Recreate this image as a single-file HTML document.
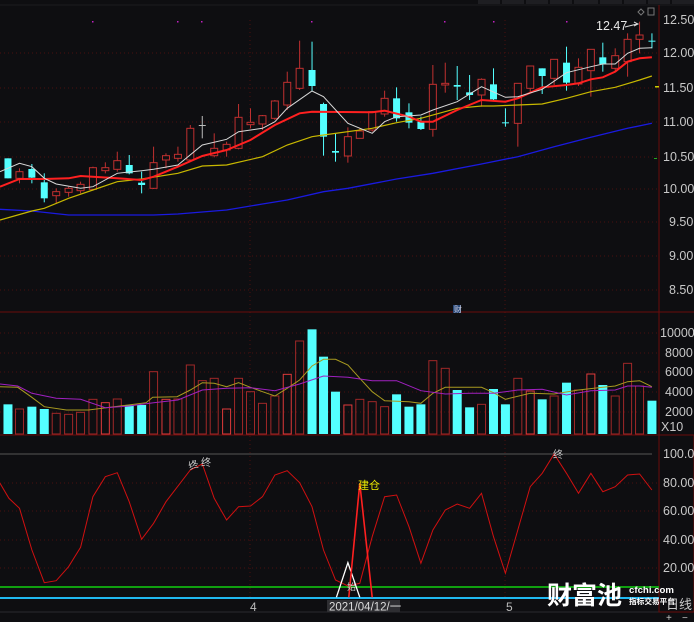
<!DOCTYPE html>
<html><head><meta charset="utf-8"><style>
html,body{margin:0;padding:0;background:#0e0e11;width:694px;height:622px;overflow:hidden}
svg{display:block}
text{font-family:"Liberation Sans","Noto Sans CJK SC",sans-serif}
</style></head><body>
<svg id="s" width="694" height="622" xmlns="http://www.w3.org/2000/svg">
<rect width="694" height="622" fill="#0e0e11"/>
<g fill="#1e1e22"><rect x="478" y="0" width="22" height="4"/><rect x="502" y="0" width="22" height="4"/><rect x="526" y="0" width="22" height="4"/><rect x="550" y="0" width="22" height="4"/><rect x="574" y="0" width="24" height="4"/><rect x="600" y="0" width="22" height="4"/><rect x="624" y="0" width="22" height="4"/><rect x="648" y="0" width="22" height="4"/><rect x="672" y="0" width="22" height="4"/></g>
<line x1="0" y1="5" x2="694" y2="5" stroke="#1c1c20"/>
<g stroke="#4a1010" stroke-dasharray="1,3">
<line x1="0" y1="53" x2="659" y2="53"/><line x1="0" y1="88" x2="659" y2="88"/><line x1="0" y1="122" x2="659" y2="122"/><line x1="0" y1="157" x2="659" y2="157"/><line x1="0" y1="189" x2="659" y2="189"/><line x1="0" y1="222" x2="659" y2="222"/><line x1="0" y1="256" x2="659" y2="256"/><line x1="0" y1="290" x2="659" y2="290"/>
<line x1="0" y1="333" x2="659" y2="333"/><line x1="0" y1="353" x2="659" y2="353"/><line x1="0" y1="372" x2="659" y2="372"/><line x1="0" y1="392" x2="659" y2="392"/><line x1="0" y1="412" x2="659" y2="412"/>
<line x1="0" y1="483" x2="659" y2="483"/><line x1="0" y1="511" x2="659" y2="511"/><line x1="0" y1="540" x2="659" y2="540"/><line x1="0" y1="568" x2="659" y2="568"/>
<line x1="250" y1="20" x2="250" y2="600"/><line x1="505" y1="20" x2="505" y2="600"/>
</g>
<g fill="#c020c0"><rect x="92" y="21" width="1.5" height="1.5"/><rect x="177" y="21" width="1.5" height="1.5"/><rect x="201" y="21" width="1.5" height="1.5"/><rect x="311" y="21" width="1.5" height="1.5"/><rect x="444" y="21" width="1.5" height="1.5"/><rect x="493" y="21" width="1.5" height="1.5"/><rect x="566" y="21" width="1.5" height="1.5"/></g>
<line x1="0" y1="312" x2="694" y2="312" stroke="#6a0c0c"/>
<line x1="0" y1="435" x2="694" y2="435" stroke="#6a0c0c"/>
<line x1="659" y1="5" x2="659" y2="612" stroke="#6a0c0c"/>
<line x1="0" y1="612" x2="694" y2="612" stroke="#2a2a2e"/>
<rect x="659" y="435" width="35" height="177" fill="none" stroke="#6a0c0c"/>
<line x1="0" y1="454" x2="652" y2="454" stroke="#555"/>
<rect x="453" y="305" width="8" height="8" fill="#2a4a7a"/><text x="454" y="312" font-size="8" fill="#ccd">财</text>
<g id="g"></g>
<g fill="#c8c8c8" font-size="12.5">
<text x="663" y="24">12.50</text><text x="663" y="57">12.00</text><text x="663" y="92">11.50</text><text x="663" y="126">11.00</text><text x="663" y="161">10.50</text><text x="663" y="193">10.00</text><text x="669" y="226">9.50</text><text x="669" y="260">9.00</text><text x="669" y="294">8.50</text>
<text x="660" y="337">10000</text><text x="665" y="357">8000</text><text x="665" y="376">6000</text><text x="665" y="396">4000</text><text x="665" y="416">2000</text><text x="661" y="431">X10</text>
<text x="663" y="458">100.0</text><text x="663" y="487">80.00</text><text x="663" y="515">60.00</text><text x="663" y="544">40.00</text><text x="663" y="572">20.00</text>
<text x="666" y="609" font-size="13">日线</text>
<text x="666" y="621" font-size="10">+</text><text x="682" y="621" font-size="10">−</text>
</g>
<text x="596" y="30" font-size="12.5" fill="#e8e8e8">12.47</text>
<path d="M625,27 L637,24" stroke="#ddd" fill="none"/><path d="M634,22 L638,24 L634,26" stroke="#ddd" fill="none"/>
<path d="M638,12 l3,-3 l3,3 l-3,3z" stroke="#777" fill="none"/><rect x="648" y="8" width="6" height="7" fill="none" stroke="#777"/>
<rect x="654" y="158" width="3" height="1" fill="#2a2"/>
<rect x="655" y="86" width="4" height="1.5" fill="#cc0"/>
<text x="250" y="611" font-size="12" fill="#bbb">4</text>
<text x="506" y="611" font-size="12" fill="#bbb">5</text>
<rect x="327" y="600" width="73" height="12" fill="#2e2e32"/>
<text x="329" y="610.5" font-size="11.5" fill="#ddd">2021/04/12/一</text>
<text x="190" y="470" font-size="10" fill="#ccc" transform="rotate(-20 190 470)">终</text><text x="201" y="466" font-size="10" fill="#ccc">终</text>
<text x="553" y="458" font-size="10" fill="#ccc">终</text>
<text x="358" y="489" font-size="11" fill="#ee0">建仓</text>
<text x="347" y="590" font-size="9" fill="#ccc">始</text>
<g>
<text x="547" y="604" font-size="25" font-weight="bold" fill="#fff" textLength="75" lengthAdjust="spacingAndGlyphs" font-family="'Noto Sans CJK SC',sans-serif">财富池</text>
<text x="629" y="593" font-size="9.5" font-weight="bold" fill="#fff" textLength="45" lengthAdjust="spacingAndGlyphs">cfchi.com</text>
<text x="629" y="604" font-size="7.5" font-weight="bold" fill="#fff" textLength="46" lengthAdjust="spacingAndGlyphs" font-family="'Noto Sans CJK SC',sans-serif">指标交易平台</text>
</g>
</svg>
<script>
var SX=1/2.2594,SY=1/3;
var C=[[18,475,535,475,535,'c'],[44,515,535,505,550,'r'],[72,507,533,492,550,'c'],[100,547,595,520,607,'c'],[127,575,587,565,610,'r'],[155,565,577,560,590,'r'],[182,553,572,545,580,'r'],[210,503,568,500,572,'r'],[238,503,512,487,520,'r'],[265,482,508,455,515,'r'],[292,495,520,465,523,'c'],[320,548,555,515,580,'c'],[347,488,565,440,567,'r'],[375,467,480,460,505,'r'],[402,463,475,440,485,'r'],[430,385,480,375,482,'r'],[457,375,377,348,415,'g'],[484,445,467,400,472,'r'],[512,433,450,425,470,'r'],[539,352,445,312,448,'r'],[566,367,374,325,385,'r'],[593,347,372,345,390,'r'],[621,303,355,300,360,'r'],[649,247,315,215,330,'r'],[677,205,265,122,270,'r'],[705,210,258,125,272,'c'],[731,312,410,308,467,'c'],[758,453,458,400,485,'c'],[786,410,468,382,488,'r'],[813,393,415,385,415,'r'],[841,335,390,333,395,'r'],[869,295,342,272,350,'r'],[896,295,355,262,365,'c'],[924,337,368,310,385,'c'],[951,365,387,350,390,'c'],[978,253,388,195,410,'r'],[1006,250,255,188,278,'r'],[1033,255,260,198,300,'c'],[1061,277,285,225,300,'c'],[1088,238,285,235,320,'r'],[1115,253,298,205,300,'c'],[1142,367,370,325,380,'c'],[1170,250,370,250,440,'r'],[1198,198,265,198,280,'r'],[1225,205,228,205,282,'c'],[1252,178,235,178,255,'r'],[1280,188,248,140,272,'c'],[1307,202,252,175,258,'r'],[1335,148,212,148,290,'r'],[1362,172,192,128,215,'c'],[1390,167,205,145,212,'r'],[1418,118,185,100,230,'r'],[1445,105,118,65,160,'r'],[1473,122,125,100,145,'c']];
var V=[283,297,290,297,310,313,307,268,278,267,285,285,185,268,267,165,212,205,297,205,245,280,258,193,93,58,140,245,285,268,275,290,253,290,283,152,175,240,292,283,237,283,205,243,268,258,218,240,192,225,258,160,228,272];
var o='';
function pl(pts,col,w,oy){oy=oy||0;var s=pts.map(function(p){return (p[0]*SX).toFixed(1)+','+(p[1]*SY+oy).toFixed(1)}).join(' ');return '<polyline points="'+s+'" fill="none" stroke="'+col+'" stroke-width="'+w+'"/>';}
C.forEach(function(c,i){var x=c[0]*SX,t=V[i]*SY+310,b=434;var cy=c[5]=='c';
 if(cy)o+='<rect x="'+(x-4.5)+'" y="'+t+'" width="9" height="'+(b-t)+'" fill="#54ffff"/>';
 else o+='<rect x="'+(x-4)+'" y="'+t+'" width="8" height="'+(b-t)+'" fill="none" stroke="'+(i%5==3?'#e03a3a':'#a02828')+'" stroke-width="1"/>';});
o+=pl([[0,230],[40,232],[70,260],[100,290],[150,300],[200,300],[240,293],[290,285],[330,278],[345,262],[400,260],[430,240],[457,218],[484,220],[512,230],[539,218],[566,232],[593,245],[621,258],[649,235],[677,210],[705,168],[731,148],[758,148],[786,165],[813,205],[841,245],[869,272],[924,275],[951,280],[978,250],[1006,232],[1088,232],[1115,248],[1142,268],[1198,250],[1252,252],[1307,240],[1362,232],[1390,228],[1418,215],[1445,212],[1473,230]],'#a89a20',1,310);
o+=pl([[0,222],[40,228],[72,250],[127,265],[182,268],[238,293],[292,288],[347,278],[402,270],[457,240],[512,235],[566,233],[621,242],[677,222],[731,198],[786,202],[841,212],[896,212],[951,242],[1006,252],[1061,250],[1115,250],[1170,240],[1225,238],[1280,255],[1335,242],[1390,240],[1418,228],[1445,228],[1473,232]],'#a020c0',1,310);
C.forEach(function(c){var x=c[0]*SX,t=c[1]*SY,b=c[2]*SY,h=c[3]*SY,l=c[4]*SY;var col=c[5]=='c'?'#54ffff':c[5]=='g'?'#bbbbbb':'#c03030';
 o+='<line x1="'+x+'" y1="'+h+'" x2="'+x+'" y2="'+l+'" stroke="'+col+'" stroke-width="1"/>';
 var bh=Math.max(b-t,1);
 if(c[5]=='c')o+='<rect x="'+(x-3.5)+'" y="'+t+'" width="7" height="'+bh+'" fill="#54ffff"/>';
 else if(c[5]=='g')o+='<rect x="'+(x-3.5)+'" y="'+t+'" width="7" height="1" fill="#bbb"/>';
 else o+='<rect x="'+(x-3.5)+'" y="'+t+'" width="7" height="'+bh+'" fill="#0e0e11" stroke="#c03030" stroke-width="1"/>';});
o+=pl([[0,628],[72,633],[155,645],[265,645],[347,645],[402,642],[512,630],[593,612],[649,600],[731,575],[786,565],[896,537],[978,520],[1088,492],[1170,470],[1252,440],[1335,412],[1418,385],[1473,370]],'#1a1ae0',1.3);
o+=pl([[0,660],[72,633],[100,625],[155,595],[210,570],[265,545],[320,537],[402,520],[457,498],[512,495],[593,470],[649,435],[705,410],[731,405],[841,385],[896,368],[951,355],[1033,325],[1088,318],[1115,318],[1170,315],[1225,312],[1280,295],[1335,275],[1390,262],[1445,240],[1473,228]],'#c8b800',1.2);
o+=pl([[0,560],[44,537],[100,537],[155,535],[182,528],[265,535],[320,540],[347,530],[402,500],[457,468],[512,450],[566,420],[621,375],[677,340],[705,335],[841,337],[869,332],[924,350],[951,365],[978,365],[1033,330],[1088,300],[1142,305],[1170,295],[1225,262],[1280,255],[1307,250],[1335,238],[1362,232],[1390,215],[1418,185],[1445,175],[1473,172]],'#ff2020',2);
o+=pl([[0,515],[44,490],[72,500],[100,535],[127,552],[182,565],[210,560],[265,520],[320,512],[347,508],[402,495],[457,435],[512,418],[539,395],[593,385],[621,365],[649,325],[705,273],[731,290],[786,370],[841,400],[869,365],[896,350],[951,345],[978,330],[1033,305],[1088,260],[1142,292],[1170,290],[1225,268],[1280,218],[1335,200],[1362,192],[1390,192],[1418,160],[1445,145],[1473,143]],'#d8d8d8',1);
o+='<line x1="0" y1="587" x2="659" y2="587" stroke="#10a010" stroke-width="2"/>';
o+='<line x1="0" y1="598" x2="659" y2="598" stroke="#20b8f0" stroke-width="2"/>';
o+=pl([[0,520],[20,565],[44,595],[72,720],[100,818],[127,812],[155,770],[182,712],[210,560],[238,500],[265,488],[292,575],[320,688],[347,640],[375,575],[430,480],[457,462],[484,565],[512,630],[539,590],[566,588],[593,560],[621,495],[649,482],[677,518],[705,590],[731,720],[758,810],[786,828],[813,820],[841,680],[869,560],[896,555],[924,650],[951,760],[978,660],[1006,600],[1033,582],[1061,595],[1088,550],[1115,680],[1142,790],[1170,660],[1198,530],[1225,490],[1252,432],[1280,490],[1307,550],[1335,490],[1362,545],[1390,530],[1418,495],[1445,492],[1473,540]],'#d01010',1,310);
o+=pl([[760,862],[786,758],[813,862]],'#ffffff',1.3,310);
o+=pl([[788,862],[813,520],[841,862]],'#ff2020',1.6,310);
document.getElementById('g').innerHTML=o;
</script>
</body></html>
